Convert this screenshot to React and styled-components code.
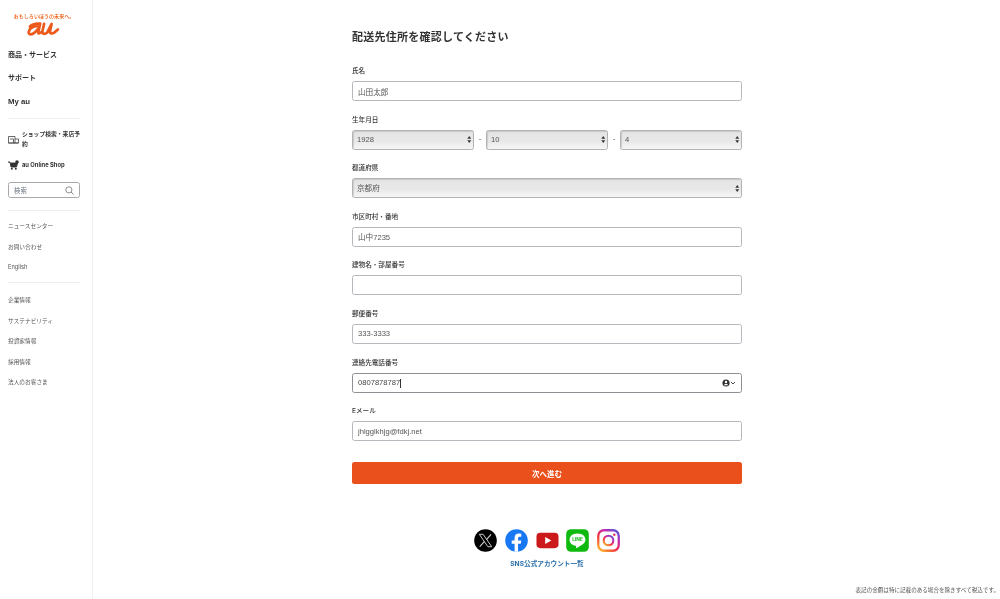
import React from "react";
import styled, { createGlobalStyle } from "styled-components";

const Global = createGlobalStyle`
  html, body { margin: 0; padding: 0; background: #fff; }
  body { font-family: "Inter", "Noto Sans CJK JP", sans-serif; color: #333; }
  * { box-sizing: border-box; }
`;
const Page = styled.div`
  display: flex; width: 1000px; height: 599px; overflow: hidden; will-change: transform;
`;
const Sidebar = styled.aside`
  width: 93px; flex: none; height: 599px; border-right: 1px solid #f0f0f0;
  padding: 13px 8px 0; display: flex; flex-direction: column;
`;
const LogoLink = styled.div`
  display: flex; flex-direction: column; align-items: center; width: 72px; height: 26px; margin-bottom: 9px;
`;
const Tagline = styled.div`
  font-size: 5.05px; line-height: 6px; color: #eb5505; white-space: nowrap; font-weight: 500;
`;
const LogoMark = styled.svg`
  margin-top: 3px; margin-right: 3px;
`;
const PrimaryItem = styled.div`
  font-family: "Liberation Sans", "Noto Sans CJK JP", sans-serif;
  font-size: ${p => p.$latin ? "7.8px" : "7px"}; font-weight: 700; color: #333; height: 23.4px; line-height: 11px; white-space: nowrap;
  padding-top: 1px;
`;
const Rule = styled.hr`
  border: 0; border-top: 1px solid #eeeeee; margin: ${p => p.$m || "0"}; width: 72px;
`;
const IconItem = styled.div`
  display: flex; align-items: center; gap: 3px; font-size: 5.8px; font-weight: 700; line-height: 10px; color: #333;
  margin-top: ${p => p.$top}px; min-height: 20px;
`;
const IconItemIcon = styled.svg`flex: none;`;
const IconItemText = styled.span`width: 60px; flex: none;`;
const SearchBox = styled.div`
  width: 72px; height: 16px; border: 1px solid #a9a9a9; border-radius: 2.5px; margin-top: 7px;
  display: flex; align-items: center; justify-content: space-between; padding: 0 5px 0 5px;
  font-size: 6.4px; color: #6a7480;
`;
const SubList = styled.div`display: flex; flex-direction: column;`;
const SubItem = styled.div`
  font-size: 5.7px; color: #555; height: 20.4px; line-height: 10px; white-space: nowrap;
`;
const Main = styled.main`
  flex: 1; display: flex; flex-direction: column; min-width: 0;
`;
const FormColumn = styled.div`
  width: 390px; margin-left: 259px; padding-top: 29px;
`;
const Title = styled.h1`
  margin: 0 0 23px; font-size: 11px; line-height: 16px; font-weight: 700; color: #333; letter-spacing: .25px;
`;
const Field = styled.div`
  height: 48.6px; display: flex; flex-direction: column;
`;
const Label = styled.label`
  font-size: 6.6px; font-weight: 500; color: #333; line-height: 7px; height: 13px; display: block;
`;
const TextInput = styled.input`
  width: 100%; height: 20px; border: 1px solid #b5b8bc; border-radius: 2.5px; background: #fff; padding: 0 5px;
  font: 400 7.6px "Liberation Sans", "Noto Sans CJK JP", sans-serif; color: #555; outline: none; display: block;
`;
const PhoneWrap = styled.div`position: relative; height: 20px;`;
const PhoneInput = styled(TextInput)`border-color: #8d9095; color: #444;`;
const Caret = styled.span`
  position: absolute; left: 48px; top: 6px; width: 1px; height: 9px; background: #333;
`;
const PhoneIcon = styled.div`
  position: absolute; right: 6px; top: 6px; display: flex; align-items: center; gap: 0;
`;
const SelectRow = styled.div`display: flex; align-items: center;`;
const SelectWrap = styled.div`position: relative; flex: 1; height: 20px;`;
const SelectBox = styled.select`
  appearance: none; width: 100%; height: 20px; border: 1px solid #b0b2b5; border-radius: 2.5px; padding: 0 4px;
  font: 400 7.6px "Liberation Sans", "Noto Sans CJK JP", sans-serif; color: #555; outline: none; display: block;
  background: linear-gradient(#e4e4e4 0%, #e8e8e8 55%, #f6f6f6 100%);
  box-shadow: inset 1px 1px 1px rgba(0,0,0,.12);
`;
const Arrows = styled.svg`position: absolute; right: 2.5px; top: 6.5px; pointer-events: none;`;
const Dash = styled.span`
  width: 12px; flex: none; text-align: center; font-size: 7px; color: #666;
`;
const NextButton = styled.button`
  display: block; width: 100%; height: 22px; margin-top: 5.5px; background: #e9501c; border: 0; border-radius: 2.5px;
  color: #fff; font: 700 7.5px "Inter", "Noto Sans CJK JP", sans-serif;
`;
const Social = styled.div`
  display: flex; justify-content: center; gap: 7.7px; margin-top: 44.5px; align-items: center; height: 24px;
`;
const SnsLink = styled.a`
  display: block; text-align: center; margin-top: 6px; font-size: 6.65px; line-height: 10px; font-weight: 700; color: #2a6eab;
`;
const Note = styled.div`
  margin-top: auto; margin-bottom: 5px; margin-right: 1px; align-self: flex-end; font-size: 5.57px; line-height: 8px; color: #555; white-space: nowrap;
`;

const Updown = () => (
  <Arrows width="4.5" height="7" viewBox="0 0 4.5 7">
    <path d="M2.25 0 L4.2 2.8 H.3Z M2.25 7 L4.2 4.2 H.3Z" fill="#333" />
  </Arrows>
);
const Sel = ({ value }) => (
  <SelectWrap>
    <SelectBox defaultValue={value}><option>{value}</option></SelectBox>
    <Updown />
  </SelectWrap>
);
const TextField = ({ label, value }) => (
  <Field>
    <Label>{label}</Label>
    <TextInput defaultValue={value} />
  </Field>
);

const X = () => (
  <svg width="23" height="23" viewBox="0 0 24 24">
    <circle cx="12" cy="12" r="11.8" fill="#000" />
    <path d="M5.5 5.5 H9.5 L18.5 18.5 H14.5Z" fill="none" stroke="#ccc" strokeWidth="1" />
    <path d="M17.8 5.5 L13 11 M11 13 L6 18.5" stroke="#ccc" strokeWidth="1.2" fill="none" />
  </svg>
);
const Fb = () => (
  <svg width="23" height="23" viewBox="0 0 24 24">
    <circle cx="12" cy="12" r="11.8" fill="#1877f2" />
    <path d="M16.4 15.3 L17 11.9 H13.6 V9.7 C13.6 8.7 14.1 8 15.5 8 H17 V5 C16.2 4.9 15.3 4.8 14.5 4.8 C11.8 4.8 10 6.4 10 9.3 V11.9 H7 V15.3 H10 V23.7 C11.2 23.9 12.4 23.9 13.6 23.7 V15.3Z" fill="#fff" />
  </svg>
);
const Yt = () => (
  <svg width="23" height="23" viewBox="0 0 24 24">
    <rect x="0.5" y="4" width="23" height="16" rx="4" fill="#cc1a1a" />
    <path d="M9.6 8.4 L16 12 L9.6 15.6Z" fill="#fff" />
  </svg>
);
const Line = () => (
  <svg width="23" height="23" viewBox="0 0 24 24">
    <rect x="0.2" y="0.2" width="23.6" height="23.6" rx="5" fill="#0dba0d" />
    <path d="M12 4.6 C6.8 4.6 3.7 7.6 3.7 11.1 C3.7 14.3 6.2 16.8 10.1 17.4 C10.9 17.6 10.5 18.9 10.5 19.6 C10.6 20.2 11.6 19.7 13 18.8 C16.4 16.7 20.3 14.5 20.3 11.1 C20.3 7.6 17.2 4.6 12 4.6Z" fill="#fff" />
    <text x="12" y="13" textAnchor="middle" fontSize="5" fontWeight="700" fontFamily="Inter, sans-serif" fill="#0dba0d">LINE</text>
  </svg>
);
const Ig = () => (
  <svg width="23" height="23" viewBox="0 0 24 24">
    <defs>
      <linearGradient id="ig" x1="0.1" y1="1" x2="0.9" y2="0">
        <stop offset="0" stopColor="#fdb72c" />
        <stop offset=".4" stopColor="#f0313f" />
        <stop offset=".7" stopColor="#c92bb0" />
        <stop offset="1" stopColor="#5a52d6" />
      </linearGradient>
    </defs>
    <rect x="1.3" y="1.3" width="21.4" height="21.4" rx="6" fill="none" stroke="url(#ig)" strokeWidth="2.4" />
    <circle cx="12" cy="12" r="5" fill="none" stroke="url(#ig)" strokeWidth="2.2" />
    <circle cx="18" cy="6" r="1.4" fill="url(#ig)" />
  </svg>
);

export default function App() {
  return (
    <>
      <Global />
      <Page>
        <Sidebar>
          <LogoLink>
            <Tagline>おもしろいほうの未来へ。</Tagline>
            <LogoMark width="34" height="14" viewBox="0 0 34 15">
              <path d="M3 5 C5 2.4 9 1.5 14 1.8 L12 10.5 C11.6 12.6 13 12.8 15 11 M12.8 5.2 C8.5 3.2 2.8 6 1.8 10.5 C1.2 14 5 13.8 8 11.4 L11.8 7.5" fill="none" stroke="#eb5a1b" strokeWidth="2.9" strokeLinecap="round" strokeLinejoin="round" />
              <path d="M18.2 2 L16.4 9.6 C15.8 13 18.8 13.6 21.6 11.2 L26.2 2 L24.6 9.6 C24.2 12.6 26.6 13 29 11.4 L33 8" fill="none" stroke="#eb5a1b" strokeWidth="2.9" strokeLinecap="round" strokeLinejoin="round" />
            </LogoMark>
          </LogoLink>
          <PrimaryItem>商品・サービス</PrimaryItem>
          <PrimaryItem>サポート</PrimaryItem>
          <PrimaryItem $latin>My au</PrimaryItem>
          <Rule />
          <IconItem $top={10}>
            <IconItemIcon width="11" height="9" viewBox="0 0 11 9">
              <path d="M.5 1.5 H7 V8 H.5Z M7 4 H10.5 V8 H7 M2 4 H5.5 V8 M.5 8 H10.5" fill="none" stroke="#444" strokeWidth=".8" />
            </IconItemIcon>
            <IconItemText>ショップ検索・来店予約</IconItemText>
          </IconItem>
          <IconItem $top={6}>
            <IconItemIcon width="11" height="10" viewBox="0 0 11 10">
              <path d="M0 2 H2 L3 7 H8.5 L9.5 3 H3" fill="#333" stroke="#333" strokeWidth=".9" />
              <circle cx="3.8" cy="8.8" r="1" fill="#333" />
              <circle cx="7.8" cy="8.8" r="1" fill="#333" />
              <circle cx="9" cy="2" r="1.8" fill="#333" />
            </IconItemIcon>
            <IconItemText>au Online Shop</IconItemText>
          </IconItem>
          <SearchBox>
            <span>検索</span>
            <svg width="9" height="9" viewBox="0 0 10 10">
              <circle cx="4.3" cy="4.3" r="3.4" fill="none" stroke="#666" strokeWidth=".8" />
              <path d="M6.8 6.8 L9.4 9.4" stroke="#666" strokeWidth=".9" />
            </svg>
          </SearchBox>
          <Rule $m="12px 0 10px" />
          <SubList>
            <SubItem>ニュースセンター</SubItem>
            <SubItem>お問い合わせ</SubItem>
            <SubItem>English</SubItem>
          </SubList>
          <Rule $m="0 0 12px" />
          <SubList>
            <SubItem>企業情報</SubItem>
            <SubItem>サステナビリティ</SubItem>
            <SubItem>投資家情報</SubItem>
            <SubItem>採用情報</SubItem>
            <SubItem>法人のお客さま</SubItem>
          </SubList>
        </Sidebar>
        <Main>
          <FormColumn>
            <Title>配送先住所を確認してください</Title>
            <TextField label="氏名" value="山田太郎" />
            <Field>
              <Label>生年月日</Label>
              <SelectRow>
                <Sel value="1928" />
                <Dash>-</Dash>
                <Sel value="10" />
                <Dash>-</Dash>
                <Sel value="4" />
              </SelectRow>
            </Field>
            <Field>
              <Label>都道府県</Label>
              <Sel value="京都府" />
            </Field>
            <TextField label="市区町村・番地" value="山中7235" />
            <TextField label="建物名・部屋番号" value="" />
            <TextField label="郵便番号" value="333-3333" />
            <Field>
              <Label>連絡先電話番号</Label>
              <PhoneWrap>
                <PhoneInput defaultValue="0807878787" />
                <Caret />
                <PhoneIcon>
                  <svg width="14" height="8" viewBox="0 0 14 8">
                    <circle cx="4" cy="4" r="3.6" fill="#333" />
                    <circle cx="4" cy="3" r="1.2" fill="#fff" />
                    <path d="M1.8 6.2 C2.4 4.6 5.6 4.6 6.2 6.2Z" fill="#fff" />
                    <path d="M9 3 L11 5 L13 3" fill="none" stroke="#333" strokeWidth=".9" />
                  </svg>
                </PhoneIcon>
              </PhoneWrap>
            </Field>
            <TextField label="Eメール" value="jhlgglkhjg@fdkj.net" />
            <NextButton>次へ進む</NextButton>
            <Social>
              <X /><Fb /><Yt /><Line /><Ig />
            </Social>
            <SnsLink>SNS公式アカウント一覧</SnsLink>
          </FormColumn>
          <Note>表記の金額は特に記載のある場合を除きすべて税込です。</Note>
        </Main>
      </Page>
    </>
  );
}
